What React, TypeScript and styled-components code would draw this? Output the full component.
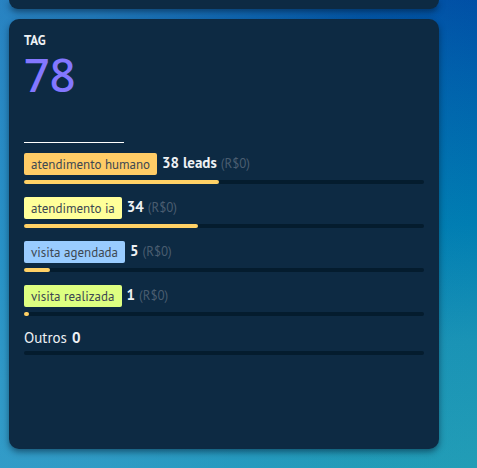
import React from "react";
import styled, { createGlobalStyle } from "styled-components";

const GlobalStyle = createGlobalStyle`
  *, *::before, *::after { box-sizing: border-box; }
  html { min-height: 100%; background: #1b8fc0; }
  body {
    margin: 0;
    min-height: 100vh;
    overflow: hidden;
    font-family: "PT Sans", "Noto Sans", sans-serif;
    color: #eef1f4;
    background:
      linear-gradient(90deg, rgba(58, 156, 207, 0.7) 0%, rgba(58, 156, 207, 0.6) 20%, rgba(48, 152, 207, 0.35) 50%, rgba(40, 150, 200, 0.1) 75%, rgba(40, 150, 200, 0) 100%),
      linear-gradient(175deg, #0047a2 0%, #005fab 22%, #007db2 52%, #1a93b5 75%, #229db6 100%);
  }
`;

const Page = styled.main`
  display: flex;
  flex-direction: column;
  gap: 10px;
  min-height: 100vh;
  padding: 0 38px 19px 9px;
`;

const surface = `
  background: #0d2a43;
  box-shadow: 0 3px 6px rgba(0, 20, 40, 0.5);
`;

const CardEdge = styled.div`
  ${surface}
  height: 9px;
  border-radius: 0 0 10px 10px;
`;

const Card = styled.section`
  ${surface}
  flex: 1;
  border-radius: 10px;
  padding: 14px 15px;
`;

const Title = styled.h2`
  margin: 0;
  font-size: 13px;
  line-height: 16px;
  font-weight: 700;
`;

const Total = styled.div`
  font-family: "Noto Sans", sans-serif;
  font-size: 45px;
  line-height: 52px;
  font-weight: 500;
  color: #8377ff;
`;

const Divider = styled.hr`
  width: 100px;
  height: 1px;
  margin: 41px 0 10px;
  border: 0;
  background: #ffffff;
`;

const List = styled.ul`
  display: grid;
  gap: 13px;
  margin: 0;
  padding: 0;
  list-style: none;
`;

const Item = styled.li`
  display: grid;
  gap: 5px;
`;

const Line = styled.div<{ $plain?: boolean }>`
  display: flex;
  align-items: flex-start;
  gap: 5px;
  font-size: 15px;
  line-height: ${(p) => (p.$plain ? 17 : 20)}px;
  white-space: nowrap;
`;

const Tag = styled.span<{ $color: string }>`
  padding: 2px 7px 0;
  border-radius: 2px;
  font-size: 13px;
  line-height: 20px;
  color: #3d4852;
  background: ${(p) => p.$color};
`;

const Count = styled.strong`
  font-weight: 700;
`;

const Amount = styled.span`
  margin-left: -1px;
  font-size: 13px;
  line-height: 21px;
  color: #4a5d70;
`;

const Track = styled.div`
  height: 4px;
  border-radius: 2px;
  background: #041c2e;
`;

const Fill = styled.div`
  height: 4px;
  border-radius: 2px;
  background: #ffd166;
`;

const total = 78;

const tags = [
  { name: "atendimento humano", color: "#ffcc66", leads: 38, unit: " leads" },
  { name: "atendimento ia", color: "#ffff99", leads: 34, unit: "" },
  { name: "visita agendada", color: "#99ccff", leads: 5, unit: "" },
  { name: "visita realizada", color: "#deff81", leads: 1, unit: "" },
];

export default function App() {
  return (
    <>
      <GlobalStyle />
      <Page>
        <CardEdge />
        <Card>
          <Title>TAG</Title>
          <Total>{total}</Total>
          <Divider />
          <List>
            {tags.map((t) => (
              <Item key={t.name}>
                <Line>
                  <Tag $color={t.color}>{t.name}</Tag>
                  <Count>{t.leads}{t.unit}</Count>
                  <Amount>(R$0)</Amount>
                </Line>
                <Track>
                  <Fill style={{ width: `${(t.leads / total) * 100}%` }} />
                </Track>
              </Item>
            ))}
            <Item>
              <Line $plain>
                <span>Outros</span>
                <Count>0</Count>
              </Line>
              <Track />
            </Item>
          </List>
        </Card>
      </Page>
    </>
  );
}
